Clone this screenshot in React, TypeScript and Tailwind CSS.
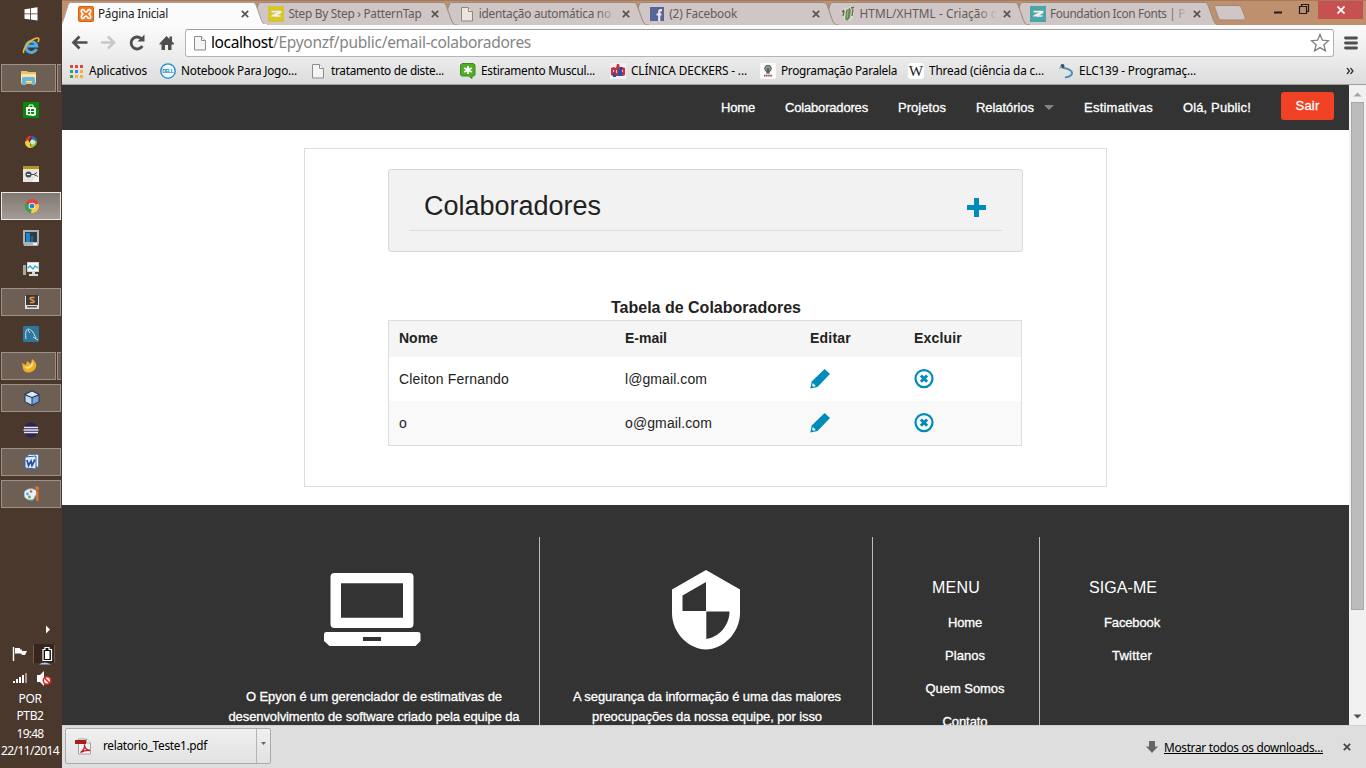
import { useLayoutEffect, useRef, useState } from "react";
import type { ReactNode } from "react";

/* Text whose letter spacing is adjusted so that it fills a given width. */
function Fit({ w, className = "", children }: { w: number; className?: string; children: ReactNode }) {
  const ref = useRef<HTMLSpanElement>(null);
  const [spacing, setSpacing] = useState(0);
  useLayoutEffect(() => {
    const el = ref.current;
    if (!el) return;
    const n = (el.textContent || "").length;
    setSpacing((w - el.getBoundingClientRect().width) / n);
  }, [w]);
  return (
    <span ref={ref} className={`inline-block shrink-0 whitespace-pre ${className}`} style={{ letterSpacing: spacing }}>
      {children}
    </span>
  );
}

const PageIcon = () => (
  <svg viewBox="0 0 16 16" className="h-4 w-4 shrink-0">
    <path d="M2.500 1.500h7l4 4v9.500h-11z" fill="#f4f4f4" stroke="#8d8d8d" />
    <path d="M9.500 1.500v4h4" fill="#fff" stroke="#8d8d8d" />
  </svg>
);
const PaleIcon = () => (
  <svg viewBox="0 0 16 16" className="h-4 w-4 shrink-0">
    <path d="M2.500 1.500h7l4 4v9.500h-11z" fill="#ece4dc" stroke="#8f8783" />
    <path d="M9.500 1.500v4h4" fill="#f3ece6" stroke="#8f8783" />
  </svg>
);
const ZIcon = ({ fill }: { fill: string }) => (
  <svg viewBox="0 0 16 16" className="h-4 w-4 shrink-0">
    <rect width="16" height="16" fill={fill} />
    <path d="M3.500 5.700H12.500V6.500L6 10H12.500" fill="none" stroke="#f4eee8" strokeWidth="1.700" />
    <path d="M3.500 11V9.300L10 6h2v1L6 10z" fill="#f4eee8" />
  </svg>
);
const XamppIcon = () => (
  <svg viewBox="0 0 16 16" className="h-4 w-4 shrink-0">
    <rect x=".5" y=".5" width="15" height="15" rx="1" fill="#f37a24" stroke="#d65f10" />
    <path d="M5.500 8C3 7.500 2.500 3.500 4.800 3.500S6 6 8 6s1-2.500 3.200-2.500S13 7.500 10.500 8c2.500.5 3 4.500.700 4.500S10 10 8 10s-1 2.500-3.200 2.500S3 8.500 5.500 8z" fill="none" stroke="#fff" strokeWidth="1.700" />
  </svg>
);
const FacebookIcon = () => (
  <svg viewBox="0 0 16 16" className="h-4 w-4 shrink-0">
    <rect x="1" y="1" width="14" height="14" fill="#58659a" />
    <path d="M13 4.200h-1.200c-1.200 0-1.600.6-1.600 1.800v9M7.500 8.500h5" fill="none" stroke="#ece8ec" strokeWidth="2.200" />
  </svg>
);
const LeafIcon = () => (
  <svg viewBox="0 0 16 16" className="h-4 w-4 shrink-0">
    <path d="M1 4l4-2 8-1 2 1-2 10-3 3H5L2 9z" fill="#ded8d0" />
    <path d="M6 4l4-2 1 2-1 8-3 3-2-2z" fill="#668b54" />
    <path d="M4 5l-1 5M13 3l-1 7M2 6l2-2M11 2l3-.5" stroke="#5c6354" fill="none" strokeWidth="1.300" />
    <path d="M8 4L7 12" stroke="#8fb07a" strokeWidth="1.200" />
  </svg>
);

function Tab({ icon, label, w, active = false, z, faded = false }: { icon: ReactNode; label: string; w: number; active?: boolean; z: string; faded?: boolean }) {
  return (
    <div className={`relative flex h-[25px] w-[190.4px] shrink-0 items-center pl-4 pt-0.5 ${z}`}>
      <svg className="absolute left-[-4px] top-0 h-[25px] w-[212px]" viewBox="-4 0 212 25">
        <path
          d="M-4 25C0 25 0 23 2 18L6 5C7 2.500 8 2.500 10 2.500H190C192 2.500 193 3 194 5L199 19C201 24 202 25 206 25"
          fill={active ? "#fbfbfb" : "#cfc6c5"}
          stroke={active ? "#a99e98" : "#948a86"}
        />
        {active && <path d="M-3 25H205" stroke="#fbfbfb" strokeWidth="2" />}
      </svg>
      <div className="relative flex items-center">
        {icon}
        <div className="relative ml-1 flex w-[140px] items-center">
          <Fit w={w} className={active ? "text-[11.8px] leading-none text-[#222]" : "text-[11.8px] leading-none text-[#625b5a]"}>{label}</Fit>
          {faded && <div className="absolute right-[2px] top-[-3px] h-5 w-5 bg-linear-to-r from-[#cfc6c5]/0 to-[#cfc6c5]" />}
        </div>
        <svg viewBox="0 0 8 8" className="ml-[3px] h-2 w-2 shrink-0">
          <path d="M.8.8l6.400 6.400M7.200.8L.8 7.200" stroke="#555" strokeWidth="1.700" />
        </svg>
      </div>
    </div>
  );
}

function TabStrip() {
  return (
    <div className="flex h-[25px] overflow-hidden border-t border-[#a9775a] bg-[#bf906e]">
      <div className="-mt-px flex">
        <Tab z="z-20" active icon={<XamppIcon />} label="Página Inicial" w={70} />
        <Tab z="z-10" icon={<ZIcon fill="#d5c62e" />} label="Step By Step › PatternTap" w={133} />
        <Tab z="z-9" faded icon={<PaleIcon />} label="identação automática no" w={132} />
        <Tab z="z-8" icon={<FacebookIcon />} label="(2) Facebook" w={68} />
        <Tab z="z-7" faded icon={<LeafIcon />} label="HTML/XHTML - Criação c" w={137} />
        <Tab z="z-6" faded icon={<ZIcon fill="#4aa6a8" />} label="Foundation Icon Fonts | P" w={135} />
      </div>
      <svg viewBox="0 0 34 18" className="ml-[9px] mt-[3px] h-[18px] w-[34px]">
        <path d="M1.500 3C1 1.500 1.500 1.500 3 1.500H24C27 1.500 27.500 2 28.500 4L32 13C32.500 15 32 16 30 16H9C7 16 6 15.500 5.500 14z" fill="#cfc6c5" stroke="#a08778" />
      </svg>
      <div className="ml-auto flex items-start">
        <svg viewBox="0 0 48 24" className="h-6 w-12 translate-x-1">
          <path d="M4 11.500h8" stroke="#1d1d1d" strokeWidth="2" />
          <path d="M29.500 5.500h7v7h-7zM31.500 5V3.500h7v7H37" fill="none" stroke="#1d1d1d" strokeWidth="1.200" />
        </svg>
        <div className="-mt-px ml-1 mr-[3px] flex h-[19px] w-[45px] items-center justify-center bg-[#c75050]">
          <svg viewBox="0 0 8 8" className="h-2 w-2"><path d="M.5.5l7 7M7.500.5l-7 7" stroke="#fff" strokeWidth="1.800" /></svg>
        </div>
      </div>
    </div>
  );
}

function Toolbar() {
  return (
    <div className="flex h-[32px] items-end bg-linear-to-b from-[#fbfbfb] to-[#ececec] pl-[9px]">
      <svg viewBox="0 0 112 28" className="h-7 w-[112px] shrink-0" fill="none">
        <path d="M2.500 13.500h14M8.500 7.500L2.500 13.500l6 6" stroke="#4e4e4e" strokeWidth="2.700" />
        <path d="M30 13.500h13M37 7.500l6 6-6 6" stroke="#c8c8c8" strokeWidth="2.700" />
        <path d="M71 10.500a6 6 0 1 0 .3 6.500" stroke="#4e4e4e" strokeWidth="2.800" />
        <path d="M66.500 12.500h7V5.500z" fill="#4e4e4e" />
        <path d="M88.500 14.500L95.500 7l3 3V7.500h2.500v5l2 2v1h-2.500V21h-3.500v-5h-3v5h-3.500v-5.500h-2z" fill="#4e4e4e" />
      </svg>
      <div className="ml-[2px] flex h-[28px] w-[1149px] items-center rounded-[3px] border border-[#b4b4b4] border-t-[#9f9f9f] bg-white pl-[6px] pr-[3px]">
        <PageIcon />
        <span className="ml-[3px] mt-[-1px] text-[15.5px] leading-none text-black"><Fit w={62}>localhost</Fit></span>
        <span className="mt-[-1px] text-[15.5px] leading-none text-[#858585]"><Fit w={258}>/Epyonzf/public/email-colaboradores</Fit></span>
        <svg viewBox="0 0 20 20" className="ml-auto h-5 w-5">
          <path d="M10 1.500l2.400 5.700 6.200.5-4.700 4 1.500 6.200L10 14.600 4.600 17.900l1.500-6.200-4.700-4 6.200-.5z" fill="#fff" stroke="#808080" strokeWidth="1.300" />
        </svg>
      </div>
      <svg viewBox="0 0 14 14" className="mb-[7.500px] ml-[10px] h-[14px] w-[14px]">
        <path d="M1.500 2h11M1.500 7h11M1.500 12h11" stroke="#4e4e4e" strokeWidth="2.800" strokeLinecap="round" />
      </svg>
    </div>
  );
}

const AppsIcon = () => (
  <svg viewBox="0 0 16 16" className="h-4 w-4">
    <path d="M2 2h3v3H2zM7 2h3v3H7zM12 2h3v3h-3z" fill="#e0443c" />
    <path d="M2 7h3v3H2z" fill="#33a05c" /><path d="M7 7h3v3H7z" fill="#3d7de0" /><path d="M12 7h3v3h-3z" fill="#f3b32e" />
    <path d="M2 12h3v3H2z" fill="#33a05c" /><path d="M7 12h3v3H7zM12 12h3v3h-3z" fill="#f3b32e" />
  </svg>
);
const DellIcon = () => (
  <svg viewBox="0 0 16 16" className="h-4 w-4">
    <circle cx="8" cy="8" r="7.200" fill="#eef6fb" stroke="#1788c5" strokeWidth="1.300" />
    <text x="2.200" y="10" fontFamily="Liberation Sans, sans-serif" fontWeight="bold" fontSize="5" textLength="11.500" fill="#1788c5">DELL</text>
  </svg>
);
const StarBubble = () => (
  <svg viewBox="0 0 16 16" className="h-4 w-4">
    <path d="M2 .5h11.500L15 2v10l-1.500 1H12v2.500L8.500 13H2L.5 12V2z" fill="#50ad25" stroke="#3a8b1b" />
    <path d="M8 3v8M4.200 5l7.600 4M11.800 5L4.200 9" stroke="#fff" strokeWidth="1.800" />
  </svg>
);
const ClinicIcon = () => (
  <svg viewBox="0 0 16 16" className="h-4 w-4">
    <rect width="16" height="16" fill="#f3eff2" />
    <path d="M1 5l3-1 2 1 1-4h2l1 4 2-1 3 1v7l-2 1H3l-2-1z" fill="#c03346" />
    <path d="M3 10h3v4H3zM8 6h4v7H8z" fill="#3150a4" /><path d="M3 7h1v2H3zM6 7h1v3H6zM12 7h1v2h-1z" fill="#eec8cc" /><path d="M10 4h2v2h-2z" fill="#692b57" />
  </svg>
);
const TreeIcon = () => (
  <svg viewBox="0 0 16 16" className="h-4 w-4">
    <rect width="16" height="16" rx="2" fill="#fcfcfc" />
    <circle cx="8" cy="5.500" r="3.300" fill="#8a958e" stroke="#55605a" /><path d="M8 5v5M6 10h4" stroke="#444" strokeWidth="1.200" />
    <path d="M4 12.700h8.500" stroke="#9a3b40" strokeWidth="1.700" strokeDasharray="1.500 .6" />
  </svg>
);
const WikiIcon = () => (
  <svg viewBox="0 0 16 16" className="h-4 w-4">
    <rect width="16" height="16" rx="3" fill="#fff" />
    <text x=".8" y="13" fontFamily="Liberation Serif, serif" fontSize="14.500" textLength="14.400" lengthAdjust="spacingAndGlyphs" fill="#222">W</text>
  </svg>
);
const MoodleIcon = () => (
  <svg viewBox="0 0 16 16" className="h-4 w-4">
    <path d="M4 4.500c4 1 10 1.500 10 5.500 0 3-4 4-7 4.500" fill="none" stroke="#4f8fb0" strokeWidth="2" />
    <circle cx="4.500" cy="3" r="2" fill="#3b4e5c" /><path d="M1 5.500l3-2" stroke="#7d99a8" />
  </svg>
);

const bookmarks = [
  { icon: <AppsIcon />, label: "Aplicativos", w: 58, item: "w-[92px]" },
  { icon: <DellIcon />, label: "Notebook Para Jogo...", w: 116, item: "w-[150px]" },
  { icon: <PageIcon />, label: "tratamento de diste...", w: 113, item: "w-[150px]" },
  { icon: <StarBubble />, label: "Estiramento Muscul...", w: 114, item: "w-[150px]" },
  { icon: <ClinicIcon />, label: "CLÍNICA DECKERS - ...", w: 116, item: "w-[150px]" },
  { icon: <TreeIcon />, label: "Programação Paralela", w: 116, item: "w-[148px]" },
  { icon: <WikiIcon />, label: "Thread (ciência da c...", w: 115, item: "w-[150px]" },
  { icon: <MoodleIcon />, label: "ELC139 - Programaç...", w: 117, item: "w-[150px]" },
];

function Bookmarks() {
  return (
    <div className="flex h-[28px] items-center border-b border-[#9e9e9e] bg-linear-to-b from-[#ececec] to-[#dcdcdc] pl-[6px] pr-[12px]">
      {bookmarks.map((b) => (
        <div key={b.label} className={`flex shrink-0 items-center ${b.item}`}>
          {b.icon}
          <Fit w={b.w} className="ml-[5px] text-[11.8px] leading-none text-black">{b.label}</Fit>
        </div>
      ))}
      <svg viewBox="0 0 8 8" className="ml-auto h-2 w-2"><path d="M1 1l2.500 3L1 7M4.500 1L7 4 4.500 7" fill="none" stroke="#333" strokeWidth="1.300" /></svg>
    </div>
  );
}

/* ---------- desktop task bar ---------- */

const ico = "h-4 w-4";
const taskIcons: { box?: "open" | "double" | "active"; icon: ReactNode }[] = [
  { icon: <svg viewBox="0 0 16 16" className={ico}><path d="M1.500 3.200L7 2.400v5.100H1.500zM7.800 2.300L14.500 1.300v6.200H7.800zM1.500 8.300H7v5.200l-5.500-.8zM7.800 8.300h6.700v6.300l-6.700-1z" fill="#fff" /></svg> },
  { icon: <svg viewBox="0 0 18 18" className="h-[18px] w-[18px]"><path d="M14.500 12a5.500 5.500 0 1 1 .3-3H5" fill="none" stroke="#4ab0e8" strokeWidth="3" /><path d="M2 16C0 14 5 5 12 2c4-2 6-1 4 3" fill="none" stroke="#f0b728" strokeWidth="1.700" /></svg> },
  { box: "double", icon: <svg viewBox="0 0 16 16" className={ico}><path d="M0 1h6l1 1h8v12H0z" fill="#e4c468" /><path d="M0 4h15v8H0z" fill="#f6e6a5" /><path d="M1 15V8q1-1 2-1h9q2 0 2 2v6h-3v-4H5v4z" fill="#68b6df" /></svg> },
  { icon: <svg viewBox="0 0 16 16" className={ico}><rect width="16" height="16" fill="#078a0c" /><path d="M3 5h8l2 1v7l-2 1-8-1z" fill="#fff" /><path d="M6 5V3h4v2" fill="none" stroke="#fff" /><path d="M5 7h2v2H5zM8 7h3v2H8zM5 10h2v2H5zM8 10h3v2H8z" fill="#078a0c" /></svg> },
  { icon: <svg viewBox="0 0 16 16" className={ico}><circle cx="8" cy="8" r="6" fill="#282a38" /><path d="M2 9c0-5 3-8 7-7L6 6l-1 4z" fill="#d9332c" /><path d="M2 8c0 4 3 6 6 6L7 9l-2-3z" fill="#f3cf31" /><path d="M8 6l4-2c4 4 1 9-4 10z" fill="#8dc63d" /><path d="M9 2c3 0 5 3 5 5L8 6z" fill="#3369b1" /><circle cx="9.500" cy="8" r="2.500" fill="#d4e6d0" /></svg> },
  { icon: <svg viewBox="0 0 16 16" className={ico}><rect width="16" height="16" fill="#e8e4de" /><path d="M0 0h16v3H0z" fill="#b49522" /><path d="M9 16L16 6v10z" fill="#f8f6f3" /><circle cx="5.500" cy="8.500" r="3" fill="#444e57" /><path d="M4 8.500h7l4 2M11 8.500l3-2" stroke="#444e57" fill="none" /><path d="M4 8.500h3" stroke="#fff" /></svg> },
  { box: "active", icon: <svg viewBox="0 0 16 16" className={ico}><circle cx="8" cy="8" r="7" fill="#e04434" /><path d="M8 8L1.500 5a7 7 0 0 0 5.500 10z" fill="#35a553" /><path d="M8 8l6.500-2.500A7 7 0 0 1 7 15z" fill="#f7cd3c" /><circle cx="8" cy="8" r="3.300" fill="#fff" /><circle cx="8" cy="8" r="2.500" fill="#3b7dd8" /></svg> },
  { icon: <svg viewBox="0 0 16 16" className={ico}><path d="M0 0h16v13l-1 3H1l-1-3z" fill="#adb2b6" /><path d="M2 2h12v10H2z" fill="#303b46" /><path d="M3 3h4v9H3z" fill="#1988d1" /><path d="M8 6h2v6H8z" fill="#236694" /><path d="M10 13h4v2h-4z" fill="#eee" /></svg> },
  { icon: <svg viewBox="0 0 16 16" className={ico}><path d="M0 3h3v10H0z" fill="#a7aba6" /><path d="M4 0h12v10H4z" fill="#cfd4d4" /><path d="M5 1h10v8H5z" fill="#f8ffff" /><path d="M5 6l2-2 3 3 2-3 3 2" fill="none" stroke="#369bd0" strokeWidth="1.300" /><path d="M9 10h3v2H9zM6 12h9v2H6z" fill="#d8dada" /><path d="M1 6h2v1H1z" fill="#60cf41" /></svg> },
  { box: "open", icon: <svg viewBox="0 0 16 16" className={ico}><path d="M1 2h14v13H1z" fill="#e1e0df" /><path d="M2 1h12v10H2z" fill="#3a3a3a" /><path d="M10.500 3.500H7.500C5 4 6 5.500 8 6S11 7.500 9 8.500H6" fill="none" stroke="#f39239" strokeWidth="1.500" /><path d="M3 12h10v1.500H3z" fill="#575757" /></svg> },
  { icon: <svg viewBox="0 0 16 16" className={ico}><rect width="16" height="16" rx="1" fill="#2e769b" /><path d="M3 13C2 8 3 3 5 3c4 0 6 5 8 9M5 4l2 3M10 11l5 3" fill="none" stroke="#cfe3ec" strokeWidth="1" /></svg> },
  { box: "double", icon: <svg viewBox="0 0 16 16" className={ico}><path d="M1 5l4 2 1-4 4 3 1-5c6 4 5 9 1 12-5 3-9 1-10-2z" fill="#f0ad25" /><path d="M2 8c5 2 9-1 9-5 3 4-1 8-5 8z" fill="#ffe18a" /></svg> },
  { box: "open", icon: <svg viewBox="0 0 16 16" className={ico}><path d="M8 .2L15.500 4v8L8 16 .5 12V4z" fill="#23365c" /><path d="M8 1.500l6 3L8 7 2 4.500z" fill="#dcecf6" /><path d="M1.500 5.500L7.500 8v6.500L1.500 11.500z" fill="#c4dcf0" /><path d="M8.500 8l6-2.500v6l-6 3z" fill="#78a4d3" /></svg> },
  { icon: <svg viewBox="0 0 16 16" className={ico}><circle cx="8" cy="8" r="7.500" fill="#2c2357" /><path d="M1 5.500h14M.5 8h15M1 10.500h14" stroke="#e8e6f2" strokeWidth="1.300" /></svg> },
  { box: "open", icon: <svg viewBox="0 0 16 16" className={ico}><path d="M4 .5h10.500V13H4z" fill="#f2f6fb" stroke="#567bb8" /><path d="M1 3l11-1v13L1 14z" fill="#e2ecf7" stroke="#3563a6" /><path d="M3 6l1.500 5.500L7 7l1 4.500 3-6" fill="none" stroke="#284f99" strokeWidth="1.700" /></svg> },
  { box: "open", icon: <svg viewBox="0 0 16 16" className={ico}><path d="M0 8c0-4 5-6 9-5s5 4 3 6-1 5-5 5-7-2-7-6z" fill="#e4f1f8" stroke="#83afc9" /><circle cx="3.500" cy="8" r="1.400" fill="#50abd9" /><circle cx="7" cy="5.500" r="1.300" fill="#e2574c" /><circle cx="5.500" cy="11" r="1.400" fill="#59b03d" /><path d="M12 5h2.500v10H12zM11 0l4 1v3h-3z" fill="#dc752b" /></svg> },
];

function Taskbar() {
  return (
    <aside className="flex h-full w-[62px] shrink-0 flex-col overflow-hidden bg-[#4a382d] text-white">
      <div className="-mt-0.5 flex flex-col">
        {taskIcons.map((t, i) => (
          <div key={i} className="flex h-8 items-center pl-px">
            {t.box ? (
              <div className="flex h-[28px] w-[60px]">
                <div className={`flex h-full flex-1 items-center justify-center border pl-px ${t.box === "active" ? "border-[#eee8e4] bg-linear-to-b from-[#817872] to-[#a39b96]" : "border-[#9c9087] bg-[#6e5f55]"}`}>{t.icon}</div>
                {t.box === "double" && <div className="ml-px w-[4px] border-y border-l border-[#9c9087] bg-[#6e5f55]" />}
              </div>
            ) : <div className="flex w-[60px] justify-center">{t.icon}</div>}
          </div>
        ))}
      </div>
      <svg viewBox="0 0 62 70" className="mt-[110px] h-[70px] w-[62px] shrink-0">
        <path d="M46 5.500l4 4-4 4z" fill="#fff" />
        <path d="M13.500 27v14" stroke="#fff" strokeWidth="1.400" /><path d="M15 28h5v1.500h2V31h5l-2 4h-3l-1-1.500h-6z" fill="#fff" />
        <path d="M34 24h20v19H34z" fill="#35251d" /><path d="M39 44.500q5-4 12 0z" fill="#a9c6e6" />
        <path d="M33.500 25v18M54.500 25v18" stroke="#6d5b50" />
        <path d="M45 27.500h4v2h2.500v11h-8.500v-11h2z" fill="#111" stroke="#fff" strokeWidth="1.200" /><path d="M45 31h4.500v8H45z" fill="#fff" />
        <path d="M13 61h2v2h-2zM16 59h2v4h-2zM19 57h2v6h-2zM22 55h2v8h-2z" fill="#fff" /><path d="M25 53h2v10h-2z" fill="#a49b95" />
        <path d="M37 55h3l4-4v15l-4-4h-3z" fill="#fff" /><circle cx="47" cy="60.500" r="3.700" fill="#fff" stroke="#e1211d" strokeWidth="1.600" /><path d="M44.500 58l5 5" stroke="#e1211d" strokeWidth="1.600" />
      </svg>
      <div className="flex w-[60px] flex-col items-center text-[12px] leading-[17.4px]">
        <Fit w={23}>POR</Fit>
        <Fit w={27}>PTB2</Fit>
        <Fit w={27}>19:48</Fit>
        <Fit w={58}>22/11/2014</Fit>
      </div>
    </aside>
  );
}

/* ---------- site ---------- */

const light = "text-[13px] text-white [-webkit-text-stroke:0.3px_white]";

function Nav() {
  return (
    <nav className={`flex h-[45px] items-center bg-[#333] ${light}`}>
      <Fit w={34} className="ml-[659px]">Home</Fit>
      <Fit w={83} className="ml-[30px]">Colaboradores</Fit>
      <Fit w={48} className="ml-[30px]">Projetos</Fit>
      <Fit w={58} className="ml-[30px]">Relatórios</Fit>
      <svg viewBox="0 0 10 5" className="ml-[10px] h-[5px] w-[10px]"><path d="M0 0h10L5 5z" fill="#858585" /></svg>
      <Fit w={69} className="ml-[30px]">Estimativas</Fit>
      <Fit w={68} className="ml-[30px]">Olá, Public!</Fit>
      <div className="ml-[30px] mt-[-3px] flex h-[28px] w-[53px] items-center justify-center rounded-[3px] bg-[#f04124]">
        <Fit w={24}>Sair</Fit>
      </div>
    </nav>
  );
}

const Pencil = () => (
  <svg viewBox="0 0 20 20" className="h-5 w-5">
    <path d="M14.600 0L20 5 7.500 18 .3 19.600 1.700 12.400z" fill="#008cba" />
    <path d="M2.800 14l3 2.900-2.700.9-1-1z" fill="#fff" />
  </svg>
);
const Remove = () => (
  <svg viewBox="0 0 20 20" className="h-5 w-5">
    <circle cx="10" cy="9.600" r="8.500" fill="none" stroke="#008cba" strokeWidth="2.200" />
    <path d="M6.900 6.500l6.200 6.200M13.100 6.500l-6.200 6.200" stroke="#008cba" strokeWidth="3" />
  </svg>
);

const cols = "grid grid-cols-[226px_185px_104px_1fr] items-center pl-[10px] text-[14px] text-[#222]";
const people = [
  { name: "Cleiton Fernando", email: "l@gmail.com", nw: 110, ew: 82, row: "bg-white" },
  { name: "o", email: "o@gmail.com", nw: 8, ew: 87, row: "bg-[#f9f9f9]" },
];

function Content() {
  return (
    <main className="flex h-[375px] shrink-0 flex-col bg-white pl-[242px] pt-[18px]">
      <section className="flex h-[339px] w-[803px] flex-col border border-[#ddd] pl-[83px] pt-[20px]">
        <div className="h-[83px] w-[635px] rounded-[3px] border border-[#d8d8d8] bg-[#f2f2f2] px-[20px]">
          <div className="flex h-[61px] items-center justify-between border-b border-[#ddd] pl-[15px] pr-[16px] pt-[12px]">
            <h1 className="text-[27px] leading-none text-[#222]"><Fit w={177}>Colaboradores</Fit></h1>
            <svg viewBox="0 0 19 19" className="mt-[3px] h-[19px] w-[19px]"><path d="M7 0h5v7h7v5h-7v7H7v-7H0V7h7z" fill="#008cba" /></svg>
          </div>
        </div>
        <h2 className="mt-[43px] flex h-[25px] w-[635px] items-center justify-center pl-px text-[16px] font-bold text-[#222]"><Fit w={190}>Tabela de Colaboradores</Fit></h2>
        <div className="w-[634px] border border-[#ddd]">
          <div className={`${cols} h-[36px] bg-[#f5f5f5] pb-[2px] font-bold`}>
            <span>Nome</span><span>E-mail</span><span><Fit w={41}>Editar</Fit></span><span><Fit w={48}>Excluir</Fit></span>
          </div>
          {people.map((p) => (
            <div key={p.email} className={`${cols} h-[44px] ${p.row}`}>
              <span><Fit w={p.nw}>{p.name}</Fit></span>
              <span><Fit w={p.ew}>{p.email}</Fit></span>
              <Pencil />
              <Remove />
            </div>
          ))}
        </div>
      </section>
    </main>
  );
}

function Links({ items }: { items: { t: string; w: number }[] }) {
  return (
    <div className={`mt-[7px] flex flex-col items-center ${light}`}>
      {items.map((i) => (
        <div key={i.t} className="flex h-[33px] items-center"><Fit w={i.w}>{i.t}</Fit></div>
      ))}
    </div>
  );
}

function Footer() {
  return (
    <footer className="flex min-h-0 flex-1 overflow-hidden bg-[#333] pl-[143px] pt-[32px]">
      <div className="flex w-[335px] flex-col items-center border-r border-[#bbb]">
        <svg viewBox="0 0 97 74" className="mt-[36px] h-[74px] w-[97px] shrink-0">
          <path fillRule="evenodd" fill="#fff" d="M10.500 0h75q4 0 4 4v47q0 4-4 4h-75q-4 0-4-4V4q0-4 4-4zM17 10.300v34.400h62V10.300zM2.500 59H94q2.500 0 2.500 2v7l-5 5H5.500L0 68v-7q0-2 2.500-2zM39 64v4h18v-4z" />
        </svg>
        <div className={`mt-[40px] flex flex-col items-center leading-[20px] ${light}`}>
          <Fit w={256} className="translate-x-[2px]">O Epyon é um gerenciador de estimativas de</Fit>
          <Fit w={291} className="translate-x-[2px]">desenvolvimento de software criado pela equipe da</Fit>
        </div>
      </div>
      <div className="flex w-[333px] flex-col items-center border-r border-[#bbb]">
        <svg viewBox="0 0 68 80" className="mt-[33px] h-[80px] w-[68px] shrink-0">
          <path fillRule="evenodd" fill="#fff" d="M34 0l34 19.500V43C68 63 51 79.500 34 79.500S0 63 0 43V19.500zM34 12L10.500 25.500V41H34zM34.300 41.500V69C46 67.500 57.500 56 57.500 41.500z" />
        </svg>
        <div className={`mt-[37px] flex flex-col items-center leading-[20px] ${light}`}>
          <Fit w={268} className="translate-x-px">A segurança da informação é uma das maiores</Fit>
          <Fit w={230} className="translate-x-px">preocupações da nossa equipe, por isso</Fit>
        </div>
      </div>
      <div className="w-[167px] border-r border-[#bbb] pt-[40px]">
        <h3 className="flex h-[22px] items-center justify-center text-[16px] text-white"><Fit w={48}>MENU</Fit></h3>
        <div className="pl-[18px]">
          <Links items={[{ t: "Home", w: 34 }, { t: "Planos", w: 40 }, { t: "Quem Somos", w: 79 }, { t: "Contato", w: 45 }]} />
        </div>
      </div>
      <div className="w-[166px] pt-[40px]">
        <h3 className="flex h-[22px] items-center justify-center text-[16px] text-white"><Fit w={68}>SIGA-ME</Fit></h3>
        <div className="pl-[18px]">
          <Links items={[{ t: "Facebook", w: 56 }, { t: "Twitter", w: 40 }]} />
        </div>
      </div>
    </footer>
  );
}

function Scrollbar() {
  return (
    <div className="flex w-[17px] shrink-0 flex-col items-center bg-[#f1f1f1]">
      <svg viewBox="0 0 17 17" className="h-[17px] w-[17px]"><path d="M4.500 11.500h8l-4-4z" fill="#a3a3a3" /></svg>
      <div className="h-[508px] w-[13px] border border-[#a8a8a8] bg-[#bcbcbc]" />
      <svg viewBox="0 0 17 17" className="mt-auto h-[17px] w-[17px]"><path d="M4.500 6.500h8l-4 4z" fill="#505050" /></svg>
    </div>
  );
}

function Downloads() {
  return (
    <div className="flex h-[43px] items-center border-t border-[#d0d0d0] bg-[#dedede] pl-[3px] pr-[15px] text-[11.8px] text-black">
      <div className="mt-[-2px] flex h-[36px] w-[206px] items-center rounded-[2px] border border-[#ababab] bg-linear-to-b from-[#f0f0f0] to-[#e2e2e2] pl-[9px]">
        <svg viewBox="0 0 17 17" className="h-[17px] w-[17px]">
          <path d="M3.500 1h8l4 4v11h-12z" fill="#f8f3f2" stroke="#aaa09e" /><path d="M11.500 1v4h4" fill="#fff" stroke="#aaa09e" />
          <path d="M0 2h11v4H0z" fill="#a51d22" /><path d="M5.500 14.500C9 12 10 9 9.500 6.500c0 3 2 5.500 5.500 6-3-.5-6 0-9.500 2z" fill="none" stroke="#b52127" strokeWidth="1.400" />
        </svg>
        <Fit w={104} className="ml-[11px] mt-[-1px] leading-none">relatorio_Teste1.pdf</Fit>
        <div className="ml-auto flex h-full w-[14px] items-center justify-center border-l border-[#b5b5b5]">
          <svg viewBox="0 0 5 3" className="mb-[6px] h-[3px] w-[5px]"><path d="M0 0h5L2.500 3z" fill="#666" /></svg>
        </div>
      </div>
      <svg viewBox="0 0 12 12" className="ml-auto h-3 w-3"><path d="M3 0h6v5.500h3L6 12 0 5.500h3z" fill="#666" /></svg>
      <Fit w={159} className="ml-[6px] border-b border-black leading-[12px]">Mostrar todos os downloads...</Fit>
      <svg viewBox="0 0 8 8" className="ml-[20px] h-2 w-2"><path d="M.8.8l6.400 6.400M7.200.8L.8 7.200" stroke="#444" strokeWidth="1.700" /></svg>
    </div>
  );
}

export default function App() {
  return (
    <div className="flex h-[768px] w-[1366px] overflow-hidden bg-[#4a382d] font-['Noto_Sans','Open_Sans',sans-serif]">
      <Taskbar />
      <div className="flex h-full w-[1304px] flex-col">
        <TabStrip />
        <Toolbar />
        <Bookmarks />
        <div className="flex h-[640px]">
          <div className="flex min-w-0 flex-1 flex-col font-['Liberation_Sans',Arial,sans-serif]">
            <Nav />
            <Content />
            <Footer />
          </div>
          <Scrollbar />
        </div>
        <Downloads />
      </div>
    </div>
  );
}
